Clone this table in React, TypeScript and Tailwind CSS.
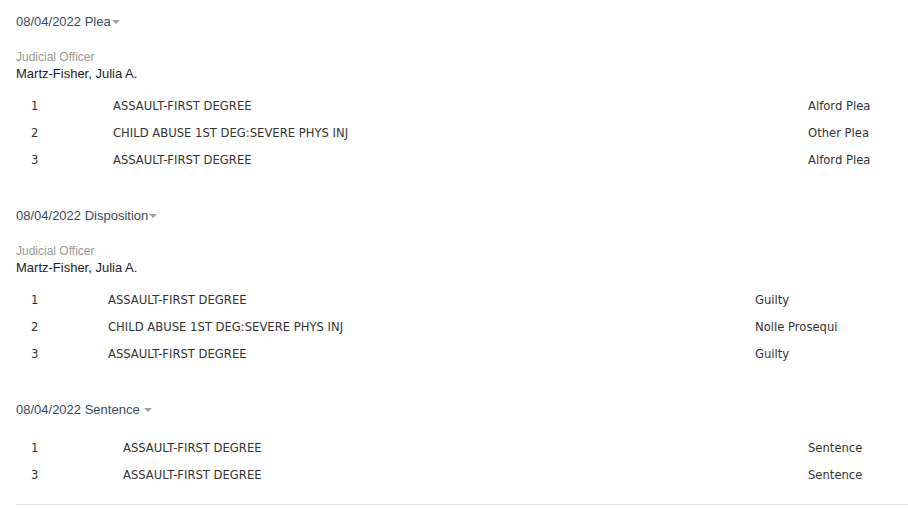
type Row = { num: string; desc: string; result: string };

type Section = {
  title: string;
  officer?: string;
  cols: string;
  rows: Row[];
};

const sections: Section[] = [
  {
    title: "08/04/2022 Plea",
    officer: "Martz-Fisher, Julia A.",
    cols: "grid-cols-[82px_695px_1fr]",
    rows: [
      { num: "1", desc: "ASSAULT-FIRST DEGREE", result: "Alford Plea" },
      { num: "2", desc: "CHILD ABUSE 1ST DEG:SEVERE PHYS INJ", result: "Other Plea" },
      { num: "3", desc: "ASSAULT-FIRST DEGREE", result: "Alford Plea" },
    ],
  },
  {
    title: "08/04/2022 Disposition",
    officer: "Martz-Fisher, Julia A.",
    cols: "grid-cols-[77px_647px_1fr]",
    rows: [
      { num: "1", desc: "ASSAULT-FIRST DEGREE", result: "Guilty" },
      { num: "2", desc: "CHILD ABUSE 1ST DEG:SEVERE PHYS INJ", result: "Nolle Prosequi" },
      { num: "3", desc: "ASSAULT-FIRST DEGREE", result: "Guilty" },
    ],
  },
  {
    title: "08/04/2022 Sentence ",
    cols: "grid-cols-[92px_685px_1fr]",
    rows: [
      { num: "1", desc: "ASSAULT-FIRST DEGREE", result: "Sentence" },
      { num: "3", desc: "ASSAULT-FIRST DEGREE", result: "Sentence" },
    ],
  },
];

function Caret() {
  return (
    <svg width="8" height="4" viewBox="0 0 8 4" className="ml-[1px] inline-block">
      <path d="M0 0 L8 0 L4 4 Z" fill="#9aa1a9" />
    </svg>
  );
}

function EventBlock({ s }: { s: Section }) {
  return (
    <div className="mb-[33px]">
      <div className="flex items-center text-[13px] leading-[18px] text-[#3b4a5e]">
        <span className="whitespace-pre">{s.title}</span>
        <Caret />
      </div>

      {s.officer && (
        <div className="mt-[18px]">
          <div className="text-[12px] leading-[16px] text-[#999999]">Judicial Officer</div>
          <div className="text-[13px] leading-[18px] text-[#222222]">{s.officer}</div>
        </div>
      )}

      <div className={s.officer ? "mt-[10px]" : "mt-[16px]"}>
        {s.rows.map((r, i) => (
          <div
            key={i}
            className={`grid ${s.cols} h-[27px] items-center pl-[15px] font-['DejaVu_Sans',Verdana,sans-serif] text-[11.6px] text-[#333333]`}
          >
            <span>{r.num}</span>
            <span>{r.desc}</span>
            <span>{r.result}</span>
          </div>
        ))}
      </div>
    </div>
  );
}

export default function App() {
  return (
    <div className="min-h-[509px] w-[908px] bg-white pl-[16px] pt-[13px] font-['Liberation_Sans',Arial,sans-serif]">
      {sections.map((s) => (
        <EventBlock key={s.title} s={s} />
      ))}
      <div className="-mt-[18px] border-t border-[#e3e3e3]" />
    </div>
  );
}
